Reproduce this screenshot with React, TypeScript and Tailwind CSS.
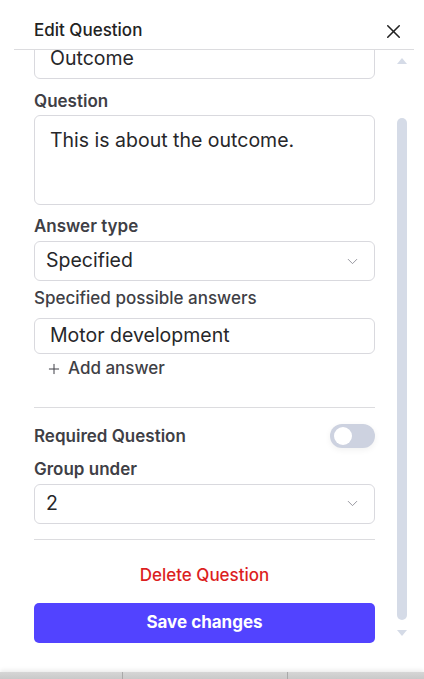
import { X, ChevronDown, Plus } from "lucide-react";

// ===== Small pieces =====
function Label({ children, className = "" }: { children: React.ReactNode; className?: string }) {
  return <div className={`text-[17px] leading-5 font-semibold text-[#3f3f46] ${className}`}>{children}</div>;
}

function SelectBox({ value, className = "" }: { value: string; className?: string }) {
  return (
    <div
      className={`flex h-[40px] items-center justify-between rounded-[6px] border border-[#d9d9de] pl-[11px] pr-[13px] ${className}`}
    >
      <span className="text-[19.5px] text-[#27272a]">{value}</span>
      <ChevronDown size={17} strokeWidth={1.25} className="text-[#8a8a93]" />
    </div>
  );
}

function Scrollbar() {
  return (
    <div className="flex w-[24px] flex-col items-center pt-[8px]">
      {/* up arrow */}
      <div className="h-0 w-0 border-x-[5px] border-b-[6px] border-x-transparent border-b-[#d5dbe7]" />
      <div className="mt-[54px] h-[502px] w-[10px] rounded-full bg-[#d5dbe7]" />
      <div className="mt-[10px] h-0 w-0 border-x-[5px] border-t-[6px] border-x-transparent border-t-[#d5dbe7]" />
    </div>
  );
}

export default function App() {
  return (
    <div className="relative flex h-[679px] w-[424px] flex-col overflow-hidden bg-white font-['Inter',sans-serif]">
      <div className="ml-[14px] flex w-[400px] flex-1 flex-col">
        {/* ===== Header ===== */}
        <div className="flex h-[50px] shrink-0 items-center justify-between border-b border-[#dcdcdf] pl-[20px] pr-[9px] pt-[13px]">
          <h1 className="text-[17px] font-medium text-[#222]">Edit Question</h1>
          <X size={23} strokeWidth={1.6} className="text-[#222]" />
        </div>

        {/* ===== Body ===== */}
        <div className="flex min-h-0 flex-1">
          <div className="min-h-0 flex-1 overflow-hidden pl-[20px] pr-[15px]">
            <div className="-mt-[11px] flex flex-col">
              <div className="flex h-[40px] items-center rounded-[6px] border border-[#d9d9de] px-[15px] text-[19.5px] text-[#27272a]">
                Outcome
              </div>

              <Label className="mt-[12px]">Question</Label>
              <div className="mt-[4px] h-[90px] rounded-[6px] border border-[#d9d9de] px-[15px] pt-[12px] text-[19.5px] leading-6 text-[#27272a]">
                This is about the outcome.
              </div>

              <Label className="mt-[11px]">Answer type</Label>
              <SelectBox value="Specified" className="mt-[5px]" />

              <div className="mt-[7px] text-[17px] leading-5 font-medium text-[#3f3f46]">Specified possible answers</div>
              <div className="mt-[10px] flex h-[36px] items-center rounded-[6px] border border-[#d9d9de] px-[15px] text-[19.5px] text-[#27272a]">
                Motor development
              </div>
              <button className="mt-[2px] flex items-center gap-[6px] pl-[12px] text-[17px] font-medium text-[#3f3f46]">
                <Plus size={16} strokeWidth={1.5} />
                <span>Add answer</span>
              </button>

              <div className="mt-[25px] border-t border-[#dcdcdf]" />

              <div className="mt-[16px] flex items-center justify-between">
                <Label>Required Question</Label>
                <div className="flex h-[24px] w-[45px] items-center rounded-full bg-[#cdd2e0] pl-[4px] shadow-[0_2px_6px_rgba(0,0,0,0.06)]">
                  <div className="h-[18px] w-[18px] rounded-full bg-white" />
                </div>
              </div>

              <Label className="mt-[11px]">Group under</Label>
              <SelectBox value="2" className="mt-[5px]" />

              <div className="mt-[15px] border-t border-[#dcdcdf]" />

              <button className="mt-[23px] text-center text-[17px] font-medium text-[#dc1f1f]">Delete Question</button>

              <button className="mt-[15px] h-[40px] rounded-[5px] bg-[#5243ff] text-[17px] font-bold text-white">
                Save changes
              </button>
            </div>
          </div>
          <Scrollbar />
        </div>
      </div>

      {/* backdrop strip below the panel */}
      <div className="flex h-[7px] shrink-0 bg-gradient-to-b from-[#d6d6d6] to-[#c9c9c9] shadow-[0_-2px_4px_rgba(0,0,0,0.08)]">
        <div className="w-[123px] border-r border-[#a9a9a9]" />
        <div className="w-[165px] border-r border-[#a9a9a9]" />
      </div>
    </div>
  );
}
